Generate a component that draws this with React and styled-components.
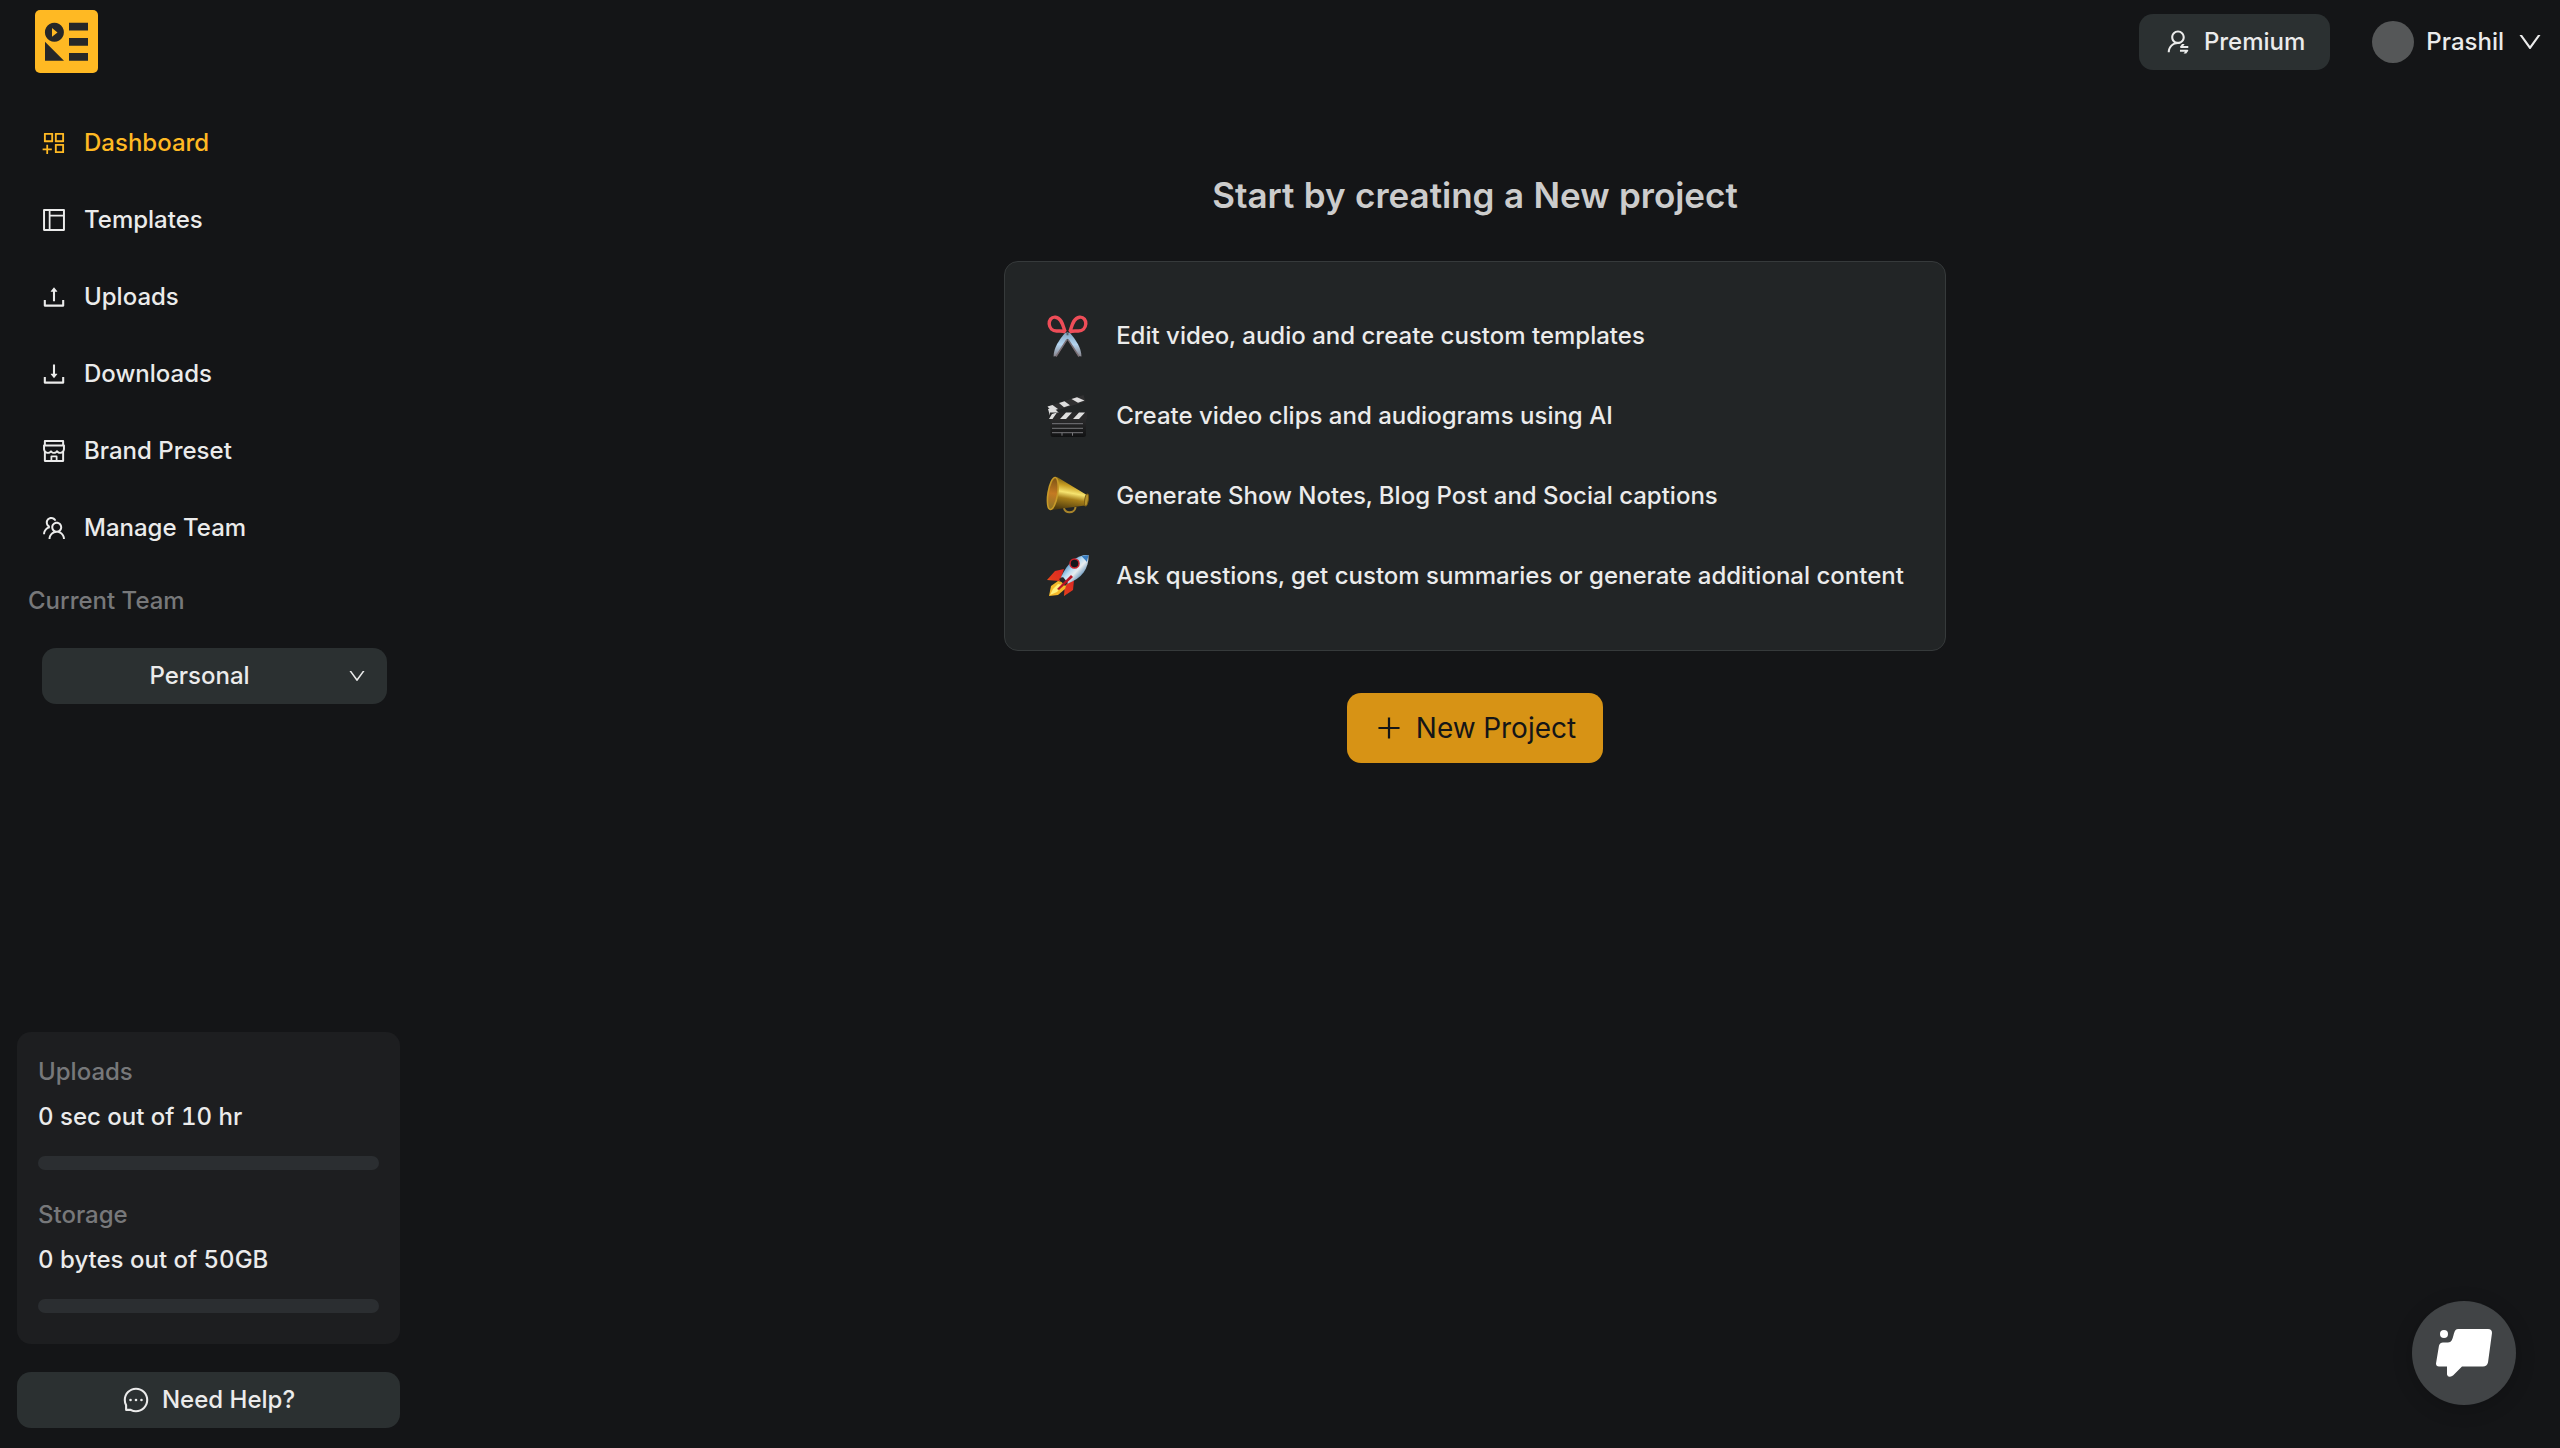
import React from "react";
import styled, { createGlobalStyle } from "styled-components";
import {
  AiOutlineAppstoreAdd,
  AiOutlineLayout,
  AiOutlineUpload,
  AiOutlineDownload,
  AiOutlineShop,
  AiOutlineTeam,
  AiOutlineUserSwitch,
  AiOutlineDown,
  AiOutlinePlus,
  AiOutlineMessage,
} from "react-icons/ai";

const Global = createGlobalStyle`
  *, *::before, *::after { box-sizing: border-box; }
  body {
    margin: 0;
    background: #141517;
    color: #ebebeb;
    font-family: Inter, "Liberation Sans", sans-serif;
    font-size: 24px;
    font-weight: 500;
    font-variant-numeric: tabular-nums;
    line-height: 40px;
  }
  button, select { font: inherit; color: inherit; border: 0; cursor: pointer; }
`;

const Page = styled.div`
  display: flex;
  flex-direction: column;
  min-height: 100vh;
  padding-bottom: 20px;
`;

const Header = styled.header`
  display: flex;
  align-items: center;
  justify-content: space-between;
  height: 84px;
  padding: 0 16px 0 35px;
`;

const Home = styled.a`
  display: flex;
`;

const HeaderActions = styled.div`
  display: flex;
  align-items: center;
  gap: 42px;
`;

const SoftButton = styled.button`
  display: flex;
  align-items: center;
  justify-content: center;
  gap: 12px;
  height: 56px;
  padding: 0 25px;
  border-radius: 14px;
  background: #2b3031;
`;

const UserMenu = styled.button`
  display: flex;
  align-items: center;
  gap: 12px;
  padding: 0;
  background: none;
`;

const Avatar = styled.span`
  width: 42px;
  height: 42px;
  border-radius: 50%;
  background: #555758;
`;

const Body = styled.div`
  display: flex;
  flex: 1;
`;

const Sidebar = styled.aside`
  display: flex;
  flex-direction: column;
  justify-content: space-between;
  flex: 0 0 400px;
  padding: 20px 0 0 17px;
`;

const NavList = styled.ul`
  display: flex;
  flex-direction: column;
  margin: 0;
  padding: 0;
  list-style: none;
`;

const NavLink = styled.a`
  display: flex;
  align-items: center;
  gap: 16px;
  height: 77px;
  padding-left: 23px;
  color: ${(p) => (p.$active ? "#ffb923" : "inherit")};
  text-decoration: none;
`;

const TeamField = styled.div`
  display: flex;
  flex-direction: column;
  gap: 27px;
  padding: 15px 13px 0 11px;
`;

const MutedLabel = styled.label`
  color: #77787a;
`;

const SelectBox = styled.div`
  display: grid;
  align-items: center;
  margin-left: 14px;
  > * { grid-area: 1 / 1; }
  > svg {
    justify-self: end;
    margin-right: 20px;
    pointer-events: none;
  }
`;

const Select = styled.select`
  appearance: none;
  width: 100%;
  height: 56px;
  padding: 0 52px 0 22px;
  border-radius: 14px;
  background: #2b3031;
  text-align: center;
  text-align-last: center;
`;

const SidebarFooter = styled.div`
  display: flex;
  flex-direction: column;
  gap: 28px;
`;

const UsageCard = styled.section`
  display: flex;
  flex-direction: column;
  gap: 25px;
  padding: 20px 21px 31px;
  border-radius: 14px;
  background: #1d1e20;
`;

const Usage = styled.div`
  display: flex;
  flex-direction: column;
  gap: 5px;
`;

const Meter = styled.div`
  height: 14px;
  margin-top: 14px;
  border-radius: 7px;
  background: #2b2e31;
`;

const Main = styled.main`
  display: flex;
  flex: 1;
  flex-direction: column;
  align-items: center;
  padding: 90px 10px 0 0;
`;

const Title = styled.h1`
  margin: 0 0 45px;
  color: #cccccc;
  font-size: 35px;
  font-weight: 600;
  line-height: 42px;
`;

const FeatureCard = styled.ul`
  display: flex;
  flex-direction: column;
  gap: 32px;
  margin: 0 0 42px;
  padding: 50px 41px;
  border: 1px solid #363a3b;
  border-radius: 14px;
  background: #222526;
  list-style: none;
`;

const Feature = styled.li`
  display: flex;
  align-items: center;
  gap: 26px;
  height: 48px;
`;

const NewProject = styled.button`
  display: flex;
  align-items: center;
  gap: 12px;
  height: 70px;
  padding: 0 27px;
  border-radius: 14px;
  background: #d79315;
  color: #141517;
  font-size: 28px;
  font-weight: 400;
`;

const ChatButton = styled.button`
  position: fixed;
  right: 44px;
  bottom: 43px;
  display: flex;
  padding: 0;
  border-radius: 50%;
  background: #414446;
  box-shadow: 0 4px 20px rgba(0, 0, 0, 0.2);
`;

const Logo = () => (
  <svg width="63" height="64" viewBox="0 0 63 64" aria-hidden="true">
    <rect width="63" height="63" rx="5" fill="#ffb923" />
    <g fill="#262728">
      <path d="M19.400 12.800a9.500 9.500 0 1 0 0.010 0zM17 18l5.500 4.400-5.500 4.400z" fillRule="evenodd" />
      <path d="M10 31.700v19h19z" />
      <path d="M34 12.700h19v7.700H34zM34 28h19v7.700H34zM34 43h19v7.700H34z" />
    </g>
  </svg>
);

const Scissors = () => (
  <svg width="44" height="44" viewBox="0 0 44 44" aria-hidden="true">
    <defs>
      <linearGradient id="blade" x1="0" y1="0" x2="0" y2="1">
        <stop offset="0" stopColor="#7fa6c4" />
        <stop offset="0.500" stopColor="#b5d5ef" />
        <stop offset="1" stopColor="#86838b" />
      </linearGradient>
    </defs>
    <path d="M19.500 18.500C13 26 8 33 7.500 42.500l3-.5L24 21z" fill="url(#blade)" />
    <path d="M23.500 18.500C30 26 35 33 35.500 42.500l-3-.5L19 21z" fill="url(#blade)" />
    <path d="M21 25.500L10 42.500M22 25.500l11 17" stroke="#7a6f75" strokeWidth="1.400" />
    <g fill="none" stroke="#ee4d58" strokeWidth="3.400">
      <path d="M19.500 18C17.500 16 17 4 9.500 3.200 5 2.800 3 6.500 3.200 10c.3 4 3.300 7 7.300 7 4.500 0 6.500-.5 9 1z" />
      <path d="M23.500 18c2-2 2.500-14 10-14.800 4.500-.4 6.500 3.300 6.300 6.800-.3 4-3.300 7-7.300 7-4.500 0-6.500-.5-9 1z" />
    </g>
    <circle cx="21.500" cy="20" r="1.800" fill="#7b93a5" />
    <circle cx="21.500" cy="20" r="0.800" fill="#414a52" />
  </svg>
);

const Clapper = () => (
  <svg width="44" height="44" viewBox="0 0 44 44" aria-hidden="true">
    <defs>
      <linearGradient id="slate" x1="0" y1="0" x2="0" y2="1">
        <stop offset="0" stopColor="#2a2a2b" />
        <stop offset="1" stopColor="#111213" />
      </linearGradient>
    </defs>
    <path d="M1.500 12.500L37.500 1l2 6.500L4 18.500z" fill="#303031" />
    <g fill="#dedede">
      <path d="M1.500 12.500l5-1.500 5.500 4-6.500 2.200z" />
      <path d="M13 9l5.500-1.700 5.500 4-6 1.900zM25.500 5l5.500-1.700 7.500 3.200-6.500 2.300z" />
      <path d="M2 15l6-1 5 5-2 4-6 2z" />
    </g>
    <path d="M4 18.500h37V25H4z" fill="#29292a" />
    <g fill="#dedede">
      <path d="M3 25l3-5 5-1.500L6.500 25zM14 25l6-6.500h6L20 25zM27 25l6-6.500h6L33 25z" />
    </g>
    <path d="M4.500 25h35.500v15.500a2.500 2.500 0 0 1-2.500 2.500H7a2.500 2.500 0 0 1-2.500-2.500z" fill="url(#slate)" />
    <path d="M6 29.700h31M6 34.300h31M6 38.700h31M16 38.700v3M26.500 38.700v3" stroke="#77777a" strokeWidth="1" />
  </svg>
);

const Megaphone = () => (
  <svg width="44" height="44" viewBox="0 0 44 44" aria-hidden="true">
    <defs>
      <linearGradient id="brass" x1="0.600" y1="0" x2="0.400" y2="1">
        <stop offset="0" stopColor="#5d470f" />
        <stop offset="0.280" stopColor="#c79d22" />
        <stop offset="0.480" stopColor="#f6e46f" />
        <stop offset="0.660" stopColor="#a67e19" />
        <stop offset="1" stopColor="#4d3a0e" />
      </linearGradient>
      <linearGradient id="bell" x1="0" y1="0" x2="0" y2="1">
        <stop offset="0" stopColor="#7a5315" />
        <stop offset="0.500" stopColor="#c47a22" />
        <stop offset="1" stopColor="#8a7426" />
      </linearGradient>
    </defs>
    <path d="M18 33.500c0 6.500 11 6.500 11.500-.5" fill="none" stroke="#a8842a" strokeWidth="2" />
    <path d="M11 3l29 17.500c2.500 1 2 9.500-1 11L5 36z" fill="url(#brass)" />
    <ellipse cx="6.800" cy="19.500" rx="4.800" ry="16.200" transform="rotate(9 6.800 19.500)" fill="url(#bell)" stroke="#c79a28" strokeWidth="1.600" />
    <ellipse cx="40.500" cy="26" rx="1.800" ry="6" transform="rotate(9 40.500 26)" fill="#b5912a" stroke="#7a5d15" />
  </svg>
);

const Rocket = () => (
  <svg width="44" height="44" viewBox="0 0 44 44" aria-hidden="true">
    <defs>
      <linearGradient id="hull" x1="0.200" y1="0.200" x2="0.800" y2="0.800">
        <stop offset="0" stopColor="#3478b7" />
        <stop offset="0.400" stopColor="#b9dcf2" />
        <stop offset="0.600" stopColor="#e9edf0" />
        <stop offset="1" stopColor="#447eae" />
      </linearGradient>
      <linearGradient id="fin" x1="1" y1="0" x2="0" y2="1">
        <stop offset="0" stopColor="#d81f2b" />
        <stop offset="0.600" stopColor="#e33a1c" />
        <stop offset="1" stopColor="#ffab27" />
      </linearGradient>
    </defs>
    <path d="M18 15L9 17 1 26l13 1zM28 26l-1 10-9 6 1-13z" fill="url(#fin)" />
    <path d="M12 27l-7 5-2 10 9-1 7-6 2-6z" fill="#f4b92a" />
    <path d="M12 30l-5 5-3 6 7-3 6-7z" fill="#fff07b" />
    <path d="M42.500 1C31 .5 22 8 15 23l6 7C36 24 43 15 42.500 1z" fill="url(#hull)" />
    <path d="M42.500 1l-7 1 5.500 6z" fill="#377cc0" />
    <path d="M13 25l4-2 5 6-3 3z" fill="#25262a" />
    <path d="M25 21L11 35l2 1 14-13z" fill="#b71424" />
    <circle cx="28.500" cy="9.500" r="4.500" fill="#15171b" stroke="#c9222b" strokeWidth="1.500" />
  </svg>
);

const ChatMark = () => (
  <svg width="104" height="104" viewBox="0 0 104 104" aria-hidden="true">
    <circle cx="32" cy="33" r="4" fill="#fff" />
    <path
      d="M46 28h30q4 0 4 4l-4 29.500q-1 4-5 4H50l-9 9q-5 3-6-1v-8h-8q-3 0-3-3l3-18q1-3 4-3h5c7 0 4-13.500 10-13.500z"
      fill="#fff"
    />
  </svg>
);

const navItems = [
  { label: "Dashboard", Icon: AiOutlineAppstoreAdd, active: true },
  { label: "Templates", Icon: AiOutlineLayout },
  { label: "Uploads", Icon: AiOutlineUpload },
  { label: "Downloads", Icon: AiOutlineDownload },
  { label: "Brand Preset", Icon: AiOutlineShop },
  { label: "Manage Team", Icon: AiOutlineTeam },
];

const features = [
  { text: "Edit video, audio and create custom templates", Icon: Scissors },
  { text: "Create video clips and audiograms using AI", Icon: Clapper },
  { text: "Generate Show Notes, Blog Post and Social captions", Icon: Megaphone },
  { text: "Ask questions, get custom summaries or generate additional content", Icon: Rocket },
];

const usage = [
  { label: "Uploads", value: "0 sec out of 10 hr" },
  { label: "Storage", value: "0 bytes out of 50GB" },
];

export default function App() {
  return (
    <Page>
      <Global />
      <Header>
        <Home href="#" aria-label="Home"><Logo /></Home>
        <HeaderActions>
          <SoftButton type="button">
            <AiOutlineUserSwitch size={28} />
            Premium
          </SoftButton>
          <UserMenu type="button">
            <Avatar />
            Prashil
            <AiOutlineDown size={28} />
          </UserMenu>
        </HeaderActions>
      </Header>
      <Body>
        <Sidebar>
          <nav>
            <NavList>
              {navItems.map(({ label, Icon, active }) => (
                <li key={label}>
                  <NavLink href="#" $active={active}>
                    <Icon size={28} />
                    {label}
                  </NavLink>
                </li>
              ))}
            </NavList>
            <TeamField>
              <MutedLabel htmlFor="team">Current Team</MutedLabel>
              <SelectBox>
                <Select id="team" defaultValue="personal">
                  <option value="personal">Personal</option>
                </Select>
                <AiOutlineDown size={20} />
              </SelectBox>
            </TeamField>
          </nav>
          <SidebarFooter>
            <UsageCard>
              {usage.map(({ label, value }) => (
                <Usage key={label}>
                  <MutedLabel as="span">{label}</MutedLabel>
                  <span>{value}</span>
                  <Meter role="progressbar" aria-label={label} aria-valuenow={0} />
                </Usage>
              ))}
            </UsageCard>
            <SoftButton type="button">
              <AiOutlineMessage size={28} />
              Need Help?
            </SoftButton>
          </SidebarFooter>
        </Sidebar>
        <Main>
          <Title>Start by creating a New project</Title>
          <FeatureCard>
            {features.map(({ text, Icon }) => (
              <Feature key={text}>
                <Icon />
                {text}
              </Feature>
            ))}
          </FeatureCard>
          <NewProject type="button">
            <AiOutlinePlus size={30} />
            New Project
          </NewProject>
        </Main>
      </Body>
      <ChatButton type="button" aria-label="Open chat"><ChatMark /></ChatButton>
    </Page>
  );
}
